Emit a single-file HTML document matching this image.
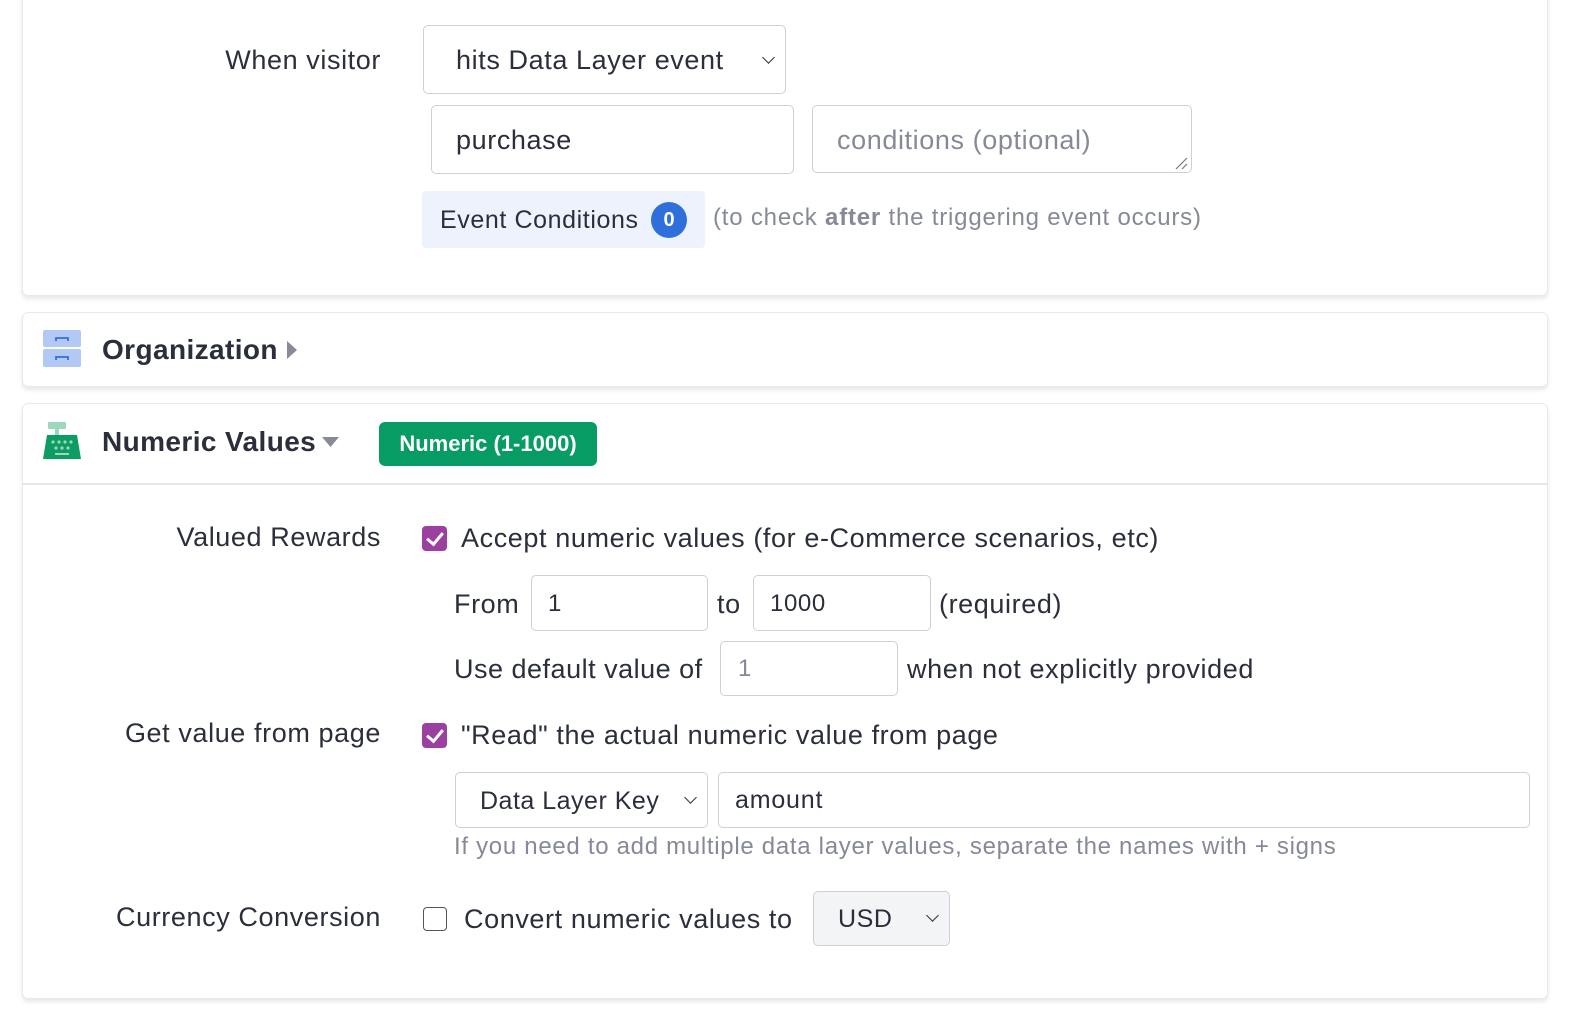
<!DOCTYPE html>
<html><head><meta charset="utf-8"><style>
*{box-sizing:border-box;margin:0;padding:0}
body{width:1576px;height:1020px;background:#fff;position:relative;overflow:hidden;font-family:"Liberation Sans",Arial,sans-serif;color:#2b2f3b}
.a{position:absolute}
.card{position:absolute;left:22px;width:1526px;background:#fff;border:1px solid #e8e9ec;border-radius:6px;box-shadow:0 3px 4px rgba(0,0,0,.09)}
.t{position:absolute;white-space:nowrap;height:30px;line-height:30px;font-size:27px;letter-spacing:.6px}
.r{text-align:right;right:1195px}
.box{position:absolute;border:1.5px solid #cdd0d9;border-radius:5px;background:#fff}
.chev{position:absolute;width:9px;height:9px;border-right:1.6px solid #333;border-bottom:1.6px solid #333;transform:rotate(45deg)}
.cb{position:absolute;width:25px;height:25px;border-radius:4px;background:#9b3fa0}
.cb:after{content:"";position:absolute;left:8px;top:3px;width:7px;height:13px;border-right:3px solid #fff;border-bottom:3px solid #fff;transform:rotate(40deg)}
.g{color:#868a97}
</style></head><body>

<div class="card" style="top:-10px;height:306px"></div>
<div class="t r" style="top:45px">When visitor</div>
<div class="box" style="left:423px;top:25px;width:363px;height:69px"></div>
<div class="t" style="left:456px;top:45px">hits Data Layer event</div>
<div class="chev" style="left:764px;top:53px"></div>
<div class="box" style="left:431px;top:105px;width:363px;height:69px"></div>
<div class="t" style="left:456px;top:125px">purchase</div>
<div class="box" style="left:812px;top:105px;width:380px;height:68px"></div>
<div class="t g" style="left:837px;top:125px">conditions (optional)</div>
<svg class="a" style="left:1174px;top:156px" width="14" height="14"><path d="M2 13L13 2M8 13L13 8" stroke="#777" stroke-width="1.2"/></svg>
<div class="a" style="left:422px;top:191px;width:283px;height:57px;background:#eef2fc;border-radius:4px"></div>
<div class="t" style="left:440px;top:205px;font-size:25px;letter-spacing:.6px">Event Conditions</div>
<div class="a" style="left:651px;top:202px;width:36px;height:36px;border-radius:50%;background:#2f6fdc;color:#fff;font-size:20px;font-weight:bold;text-align:center;line-height:36px">0</div>
<div class="t g" style="left:713px;top:203px;font-size:24px;letter-spacing:.8px">(to check <b>after</b> the triggering event occurs)</div>

<div class="card" style="top:312px;height:75px"></div>
<svg class="a" style="left:43px;top:330px" width="38" height="37"><rect x="0" y="0" width="38" height="17" rx="2" fill="#b3c8f4"/><rect x="0" y="19" width="38" height="18" rx="2" fill="#b3c8f4"/><path d="M13 11V8h12v3M13 30v-3h12v3" stroke="#2f6fdc" stroke-width="1.8" fill="none"/></svg>
<div class="t" style="left:102px;top:335px;font-size:28px;font-weight:bold;letter-spacing:.4px">Organization</div>
<svg class="a" style="left:287px;top:341px" width="10" height="18"><path d="M0 0L10 9L0 18Z" fill="#888b96"/></svg>

<div class="card" style="top:403px;height:596px"></div>
<div class="a" style="left:23px;top:483px;width:1524px;height:2px;background:#e6e7ea"></div>
<svg class="a" style="left:43px;top:422px" width="38" height="37"><rect x="5" y="0" width="18" height="7" rx="1" fill="#9cd8bd"/><rect x="12" y="7" width="4" height="6" fill="#9cd8bd"/><path d="M4 13h30l4 24H0z" fill="#0d9c62"/><g fill="#9cd8bd"><circle cx="10" cy="20" r="1.6"/><circle cx="16" cy="20" r="1.6"/><circle cx="22" cy="20" r="1.6"/><circle cx="28" cy="20" r="1.6"/><circle cx="13" cy="26" r="1.6"/><circle cx="19" cy="26" r="1.6"/><circle cx="25" cy="26" r="1.6"/><rect x="12" y="31" width="14" height="2"/></g></svg>
<div class="t" style="left:102px;top:427px;font-size:28px;font-weight:bold;letter-spacing:.4px">Numeric Values</div>
<svg class="a" style="left:322px;top:437px" width="17" height="10"><path d="M0 0H17L8.5 10Z" fill="#888b96"/></svg>
<div class="a" style="left:379px;top:422px;width:218px;height:44px;background:#079c63;border-radius:6px;color:#fff;font-weight:bold;font-size:22px;text-align:center;line-height:44px">Numeric (1-1000)</div>

<div class="t r" style="top:522px">Valued Rewards</div>
<div class="cb" style="left:422px;top:526px"></div>
<div class="t" style="left:461px;top:523px">Accept numeric values (for e-Commerce scenarios, etc)</div>
<div class="t" style="left:454px;top:589px">From</div>
<div class="box" style="left:531px;top:575px;width:177px;height:56px"></div>
<div class="t" style="left:548px;top:589px;font-size:24px">1</div>
<div class="t" style="left:717px;top:589px">to</div>
<div class="box" style="left:753px;top:575px;width:178px;height:56px"></div>
<div class="t" style="left:770px;top:589px;font-size:24px">1000</div>
<div class="t" style="left:939px;top:589px">(required)</div>
<div class="t" style="left:454px;top:654px;letter-spacing:.5px">Use default value of</div>
<div class="box" style="left:720px;top:641px;width:178px;height:55px"></div>
<div class="t g" style="left:738px;top:654px;font-size:24px">1</div>
<div class="t" style="left:907px;top:654px">when not explicitly provided</div>

<div class="t r" style="top:718px">Get value from page</div>
<div class="cb" style="left:422px;top:723px"></div>
<div class="t" style="left:461px;top:720px">"Read" the actual numeric value from page</div>
<div class="box" style="left:455px;top:772px;width:253px;height:56px"></div>
<div class="t" style="left:480px;top:786px;font-size:25px;letter-spacing:.5px">Data Layer Key</div>
<div class="chev" style="left:686px;top:793px"></div>
<div class="box" style="left:718px;top:772px;width:812px;height:56px"></div>
<div class="t" style="left:735px;top:785px;font-size:25px;letter-spacing:.8px">amount</div>
<div class="t g" style="left:454px;top:832px;font-size:24px;letter-spacing:.7px">If you need to add multiple data layer values, separate the names with + signs</div>

<div class="t r" style="top:902px">Currency Conversion</div>
<div class="a" style="left:423px;top:907px;width:24px;height:24px;border:1.6px solid #555;border-radius:4px"></div>
<div class="t" style="left:464px;top:904px">Convert numeric values to</div>
<div class="box" style="left:813px;top:891px;width:137px;height:55px;background:#f3f4f6"></div>
<div class="t" style="left:838px;top:904px;font-size:25px">USD</div>
<div class="chev" style="left:928px;top:911px"></div>
</body></html>
